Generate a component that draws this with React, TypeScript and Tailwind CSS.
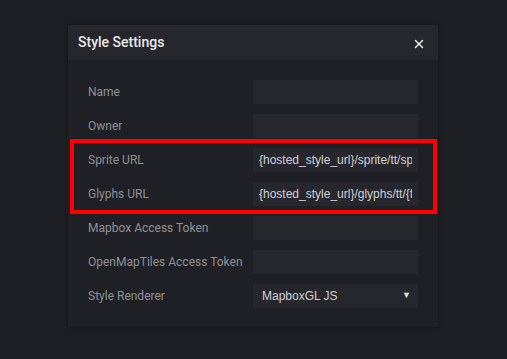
import { X } from "lucide-react";

const rows: { label: string; value?: string }[] = [
  { label: "Name" },
  { label: "Owner" },
  { label: "Sprite URL", value: "{hosted_style_url}/sprite/tt/sprite" },
  { label: "Glyphs URL", value: "{hosted_style_url}/glyphs/tt/{fontstack}/{range}.pbf" },
  { label: "Mapbox Access Token" },
  { label: "OpenMapTiles Access Token" },
];

const fieldFont = { fontFamily: "'Liberation Sans', Arial, sans-serif" };

export default function App() {
  return (
    <div
      className="w-[507px] h-[359px] bg-[#1c1e23] pt-[25px] pl-[68px]"
      style={{ fontFamily: "Roboto, 'Liberation Sans', sans-serif" }}
    >
      <div className="w-[370px] bg-[#1e2025] shadow-[0_0_3px_rgba(0,0,0,0.35)]">
        <div className="h-[35px] bg-[#26272c] flex items-center justify-between pl-[10px] pr-[12px]">
          <h1 className="text-[14px] font-medium text-[#e8e8ea]">Style Settings</h1>
          <X size={14} strokeWidth={2.5} className="text-[#eeeeee] mt-[2px]" />
        </div>
        <div className="relative px-[20px] pt-[20px] pb-[19px] flex flex-col gap-[10px]">
          {rows.map((r) => (
            <div key={r.label} className="grid grid-cols-2 items-center h-[24px]">
              <span className="text-[12px] text-[#8f9096]">{r.label}</span>
              <input
                readOnly
                value={r.value ?? ""}
                style={fieldFont}
                className="h-[24px] w-full bg-[#26272c] px-[6px] text-[12px] text-[#d0d1d4] outline-none"
              />
            </div>
          ))}
          <div className="grid grid-cols-2 items-center h-[24px]">
            <span className="text-[12px] text-[#8f9096]">Style Renderer</span>
            <div
              style={fieldFont}
              className="h-[24px] bg-[#26272c] flex items-center justify-between pl-[9px] pr-[7px] text-[12px] text-[#d0d1d4]"
            >
              <span>MapboxGL JS</span>
              <span className="text-[9px] text-[#dddddd]">▼</span>
            </div>
          </div>
          <div className="absolute left-[2px] top-[79px] w-[367px] h-[75px] border-4 border-[#ff0000] pointer-events-none" />
        </div>
      </div>
    </div>
  );
}
